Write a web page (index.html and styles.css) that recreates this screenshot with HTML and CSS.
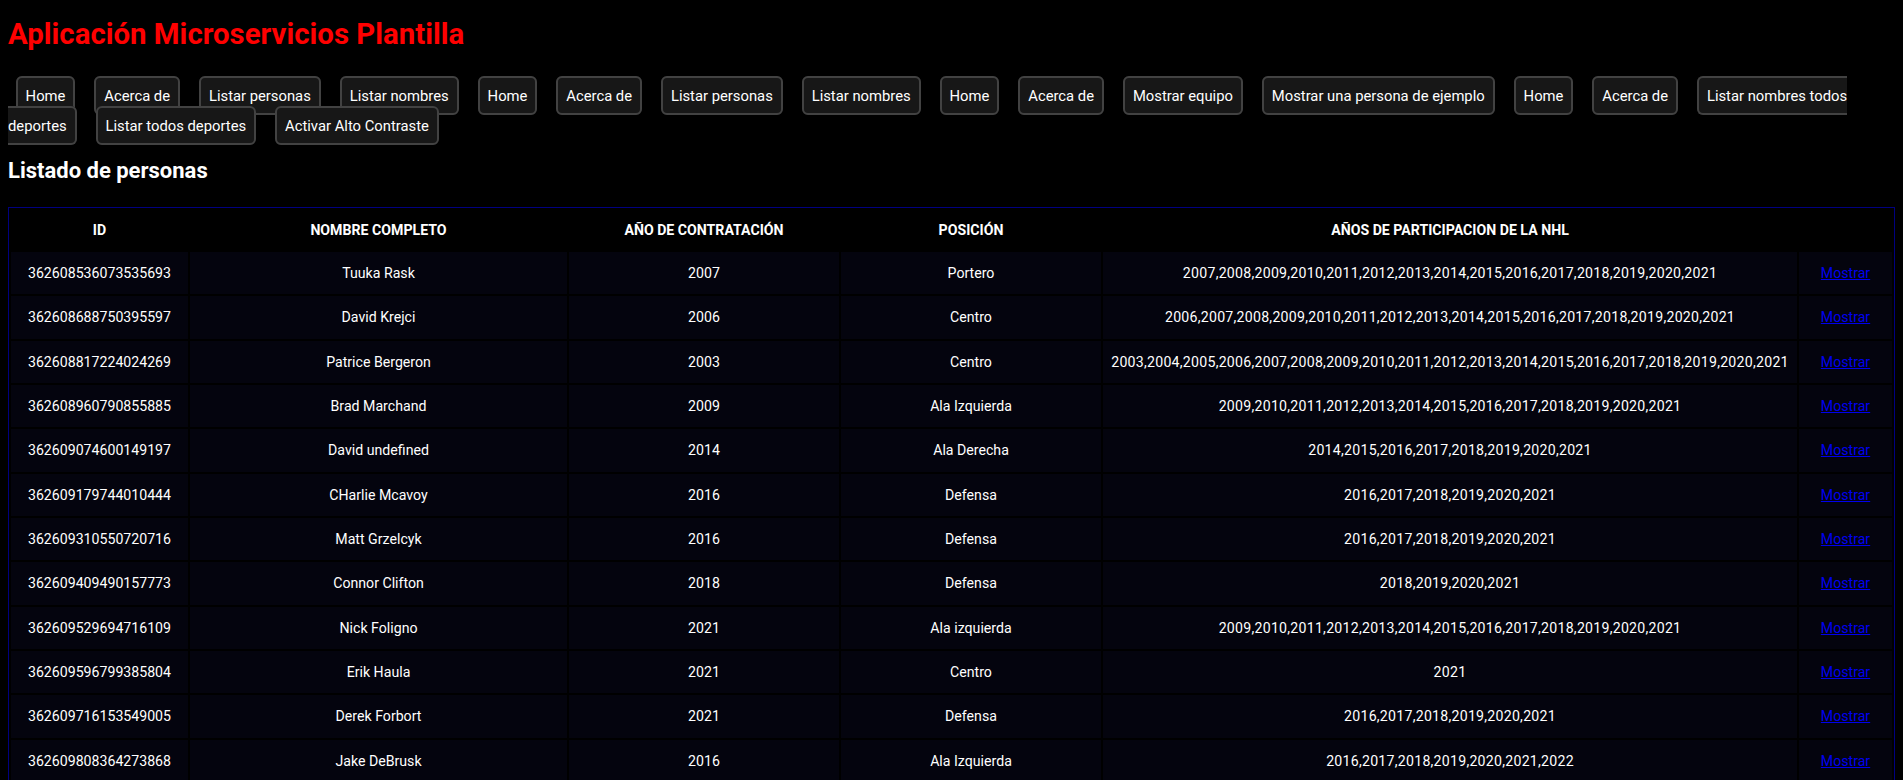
FILE: index.html
```html
<!DOCTYPE html>
<html lang="es">
<head>
<meta charset="utf-8">
<title>Aplicación Microservicios Plantilla</title>
<link rel="stylesheet" href="styles.css">
</head>
<body>
<div class="page">
  <h1 class="app-title">Aplicación Microservicios Plantilla</h1>
  <nav class="nav">
    <a class="nav-btn" href="#">Home</a>
    <a class="nav-btn" href="#">Acerca de</a>
    <a class="nav-btn" href="#">Listar personas</a>
    <a class="nav-btn" href="#">Listar nombres</a>
    <a class="nav-btn" href="#">Home</a>
    <a class="nav-btn" href="#">Acerca de</a>
    <a class="nav-btn" href="#">Listar personas</a>
    <a class="nav-btn" href="#">Listar nombres</a>
    <a class="nav-btn" href="#">Home</a>
    <a class="nav-btn" href="#">Acerca de</a>
    <a class="nav-btn" href="#">Mostrar equipo</a>
    <a class="nav-btn" href="#">Mostrar una persona de ejemplo</a>
    <a class="nav-btn" href="#">Home</a>
    <a class="nav-btn" href="#">Acerca de</a>
    <a class="nav-btn" href="#">Listar nombres todos deportes</a>
    <a class="nav-btn" href="#">Listar todos deportes</a>
    <a class="nav-btn" href="#">Activar Alto Contraste</a>
  </nav>
  <h2 class="section-title">Listado de personas</h2>
  <table class="people">
    <thead>
      <tr>
        <th class="c-id">ID</th>
        <th class="c-name">NOMBRE COMPLETO</th>
        <th class="c-year">AÑO DE CONTRATACIÓN</th>
        <th class="c-pos">POSICIÓN</th>
        <th class="c-years">AÑOS DE PARTICIPACION DE LA NHL</th>
        <th class="c-act"></th>
      </tr>
    </thead>
    <tbody>
      <tr><td>362608536073535693</td><td>Tuuka Rask</td><td>2007</td><td>Portero</td><td class="years">2007,2008,2009,2010,2011,2012,2013,2014,2015,2016,2017,2018,2019,2020,2021</td><td><a class="show-link" href="#">Mostrar</a></td></tr>
      <tr><td>362608688750395597</td><td>David Krejci</td><td>2006</td><td>Centro</td><td class="years">2006,2007,2008,2009,2010,2011,2012,2013,2014,2015,2016,2017,2018,2019,2020,2021</td><td><a class="show-link" href="#">Mostrar</a></td></tr>
      <tr><td>362608817224024269</td><td>Patrice Bergeron</td><td>2003</td><td>Centro</td><td class="years">2003,2004,2005,2006,2007,2008,2009,2010,2011,2012,2013,2014,2015,2016,2017,2018,2019,2020,2021</td><td><a class="show-link" href="#">Mostrar</a></td></tr>
      <tr><td>362608960790855885</td><td>Brad Marchand</td><td>2009</td><td>Ala Izquierda</td><td class="years">2009,2010,2011,2012,2013,2014,2015,2016,2017,2018,2019,2020,2021</td><td><a class="show-link" href="#">Mostrar</a></td></tr>
      <tr><td>362609074600149197</td><td>David undefined</td><td>2014</td><td>Ala Derecha</td><td class="years">2014,2015,2016,2017,2018,2019,2020,2021</td><td><a class="show-link" href="#">Mostrar</a></td></tr>
      <tr><td>362609179744010444</td><td>CHarlie Mcavoy</td><td>2016</td><td>Defensa</td><td class="years">2016,2017,2018,2019,2020,2021</td><td><a class="show-link" href="#">Mostrar</a></td></tr>
      <tr><td>362609310550720716</td><td>Matt Grzelcyk</td><td>2016</td><td>Defensa</td><td class="years">2016,2017,2018,2019,2020,2021</td><td><a class="show-link" href="#">Mostrar</a></td></tr>
      <tr><td>362609409490157773</td><td>Connor Clifton</td><td>2018</td><td>Defensa</td><td class="years">2018,2019,2020,2021</td><td><a class="show-link" href="#">Mostrar</a></td></tr>
      <tr><td>362609529694716109</td><td>Nick Foligno</td><td>2021</td><td>Ala izquierda</td><td class="years">2009,2010,2011,2012,2013,2014,2015,2016,2017,2018,2019,2020,2021</td><td><a class="show-link" href="#">Mostrar</a></td></tr>
      <tr><td>362609596799385804</td><td>Erik Haula</td><td>2021</td><td>Centro</td><td class="years">2021</td><td><a class="show-link" href="#">Mostrar</a></td></tr>
      <tr><td>362609716153549005</td><td>Derek Forbort</td><td>2021</td><td>Defensa</td><td class="years">2016,2017,2018,2019,2020,2021</td><td><a class="show-link" href="#">Mostrar</a></td></tr>
      <tr><td>362609808364273868</td><td>Jake DeBrusk</td><td>2016</td><td>Ala Izquierda</td><td class="years">2016,2017,2018,2019,2020,2021,2022</td><td><a class="show-link" href="#">Mostrar</a></td></tr>
    </tbody>
  </table>
</div>
</body>
</html>
```
FILE: styles.css
```css
html, body {
  margin: 0;
  padding: 0;
  background: #000;
  color: #fff;
  font-family: Roboto, "Liberation Sans", sans-serif;
}

.page {
  padding: 0 8px;
}

.app-title {
  margin: 16px 0 0;
  font-size: 29.4px;
  line-height: 36px;
  font-weight: 700;
  color: #ff0000;
}

.nav {
  margin-top: 28.7px;
  font-size: 14.8px;
  line-height: 30px;
}

.nav-btn {
  margin: 0 7.6px;
  padding: 8.6px 8px;
  background: #171717;
  border: 2px solid #424242;
  border-radius: 6px;
  color: #fff;
  text-decoration: none;
}

.section-title {
  margin: 16.3px 0 22px;
  font-size: 22px;
  line-height: 28px;
  font-weight: 700;
}

.people {
  width: 100%;
  table-layout: fixed;
  border: 1px solid #000080;
  border-spacing: 2px;
  font-size: 14.15px;
}

.people th {
  padding: 10px 0;
  line-height: 20px;
  font-weight: 700;
  text-align: center;
}

.people td {
  padding: 11px 0;
  line-height: 20.35px;
  text-align: center;
  background: #04040e;
}

.people td.years {
  letter-spacing: 0.25px;
}

.c-id { width: 177px; }
.c-name { width: 377px; }
.c-year { width: 270px; }
.c-pos { width: 260px; }
.c-years { width: 694px; }

.show-link {
  color: #0000ee;
  text-decoration: underline;
}
```
